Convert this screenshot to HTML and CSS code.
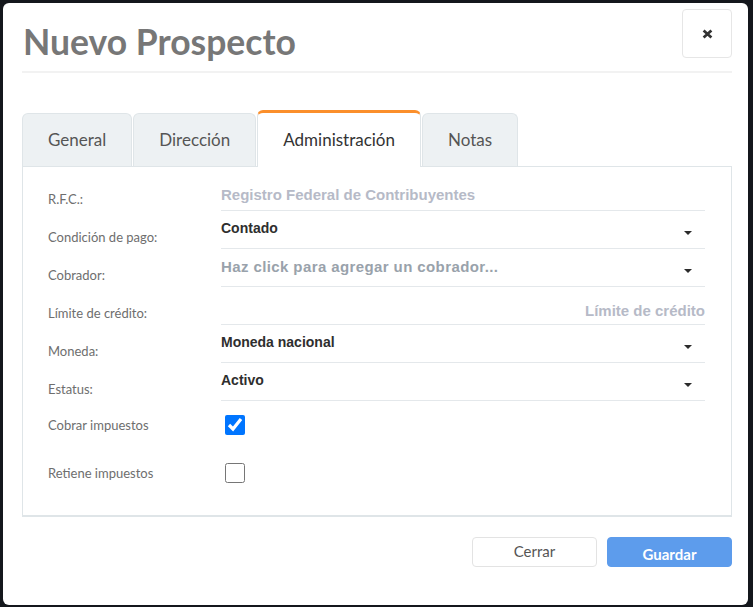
FILE: index.html
```html
<!DOCTYPE html>
<html lang="es">
<head>
<meta charset="utf-8">
<title>Nuevo Prospecto</title>
<link rel="stylesheet" href="styles.css">
</head>
<body>
<div class="modal">
  <header class="modal-header">
    <h1 class="title">Nuevo Prospecto</h1>
    <button class="close" type="button" aria-label="Cerrar">
      <svg width="11" height="10" viewBox="0 0 11 10"><path d="M1.6 1.4 L9.4 8.6 M9.4 1.4 L1.6 8.6" stroke="#333" stroke-width="2.7" fill="none"/></svg>
    </button>
  </header>

  <nav class="tabs">
    <div class="tab">General</div>
    <div class="tab">Dirección</div>
    <div class="tab active">Administración</div>
    <div class="tab">Notas</div>
  </nav>

  <div class="panel">
    <div class="row">
      <label class="lbl">R.F.C.:</label>
      <input class="field text-input" type="text" placeholder="Registro Federal de Contribuyentes">
    </div>
    <div class="row">
      <label class="lbl">Condición de pago:</label>
      <div class="field select"><span class="value">Contado</span><span class="caret"></span></div>
    </div>
    <div class="row">
      <label class="lbl">Cobrador:</label>
      <div class="field select"><span class="value placeholder">Haz click para agregar un cobrador...</span><span class="caret"></span></div>
    </div>
    <div class="row">
      <label class="lbl">Límite de crédito:</label>
      <input class="field text-input right" type="text" placeholder="Límite de crédito">
    </div>
    <div class="row">
      <label class="lbl">Moneda:</label>
      <div class="field select"><span class="value">Moneda nacional</span><span class="caret"></span></div>
    </div>
    <div class="row">
      <label class="lbl">Estatus:</label>
      <div class="field select"><span class="value">Activo</span><span class="caret"></span></div>
    </div>
    <div class="row check-row">
      <label class="lbl">Cobrar impuestos</label>
      <input class="check" type="checkbox" checked>
    </div>
    <div class="row check-row">
      <label class="lbl">Retiene impuestos</label>
      <input class="check" type="checkbox">
    </div>
  </div>

  <footer class="modal-footer">
    <button class="btn btn-default" type="button">Cerrar</button>
    <button class="btn btn-primary" type="button">Guardar</button>
  </footer>
</div>
</body>
</html>
```

FILE: styles.css
```css
html, body {
  margin: 0;
  padding: 0;
}

body {
  width: 753px;
  height: 607px;
  overflow: hidden;
  background: #14171c;
  font-family: Lato, "Open Sans", sans-serif;
}

.modal {
  margin: 3px 0 0 3px;
  width: 745px;
  height: 602px;
  box-sizing: border-box;
  padding: 0 16px 0 19px;
  background: #fff;
  border-radius: 6px;
}

/* Header */
.modal-header {
  height: 70px;
  box-sizing: border-box;
  display: flex;
  justify-content: space-between;
  align-items: flex-start;
  border-bottom: 2px solid #f2f2f2;
}

.title {
  margin: 19px 0 0 1px;
  font-size: 35.5px;
  line-height: 40px;
  font-weight: 700;
  color: #777;
}

.close {
  margin-top: 6px;
  width: 50px;
  height: 49px;
  padding: 0;
  background: #fff;
  border: 1px solid #e6e6e6;
  border-radius: 4px;
  display: flex;
  align-items: center;
  justify-content: center;
}

/* Tabs */
.tabs {
  display: flex;
  align-items: flex-end;
  margin-top: 37px;
  height: 56px;
}

.tab {
  height: 53px;
  box-sizing: border-box;
  padding: 0 25px 1px;
  margin-right: 1px;
  border: 1px solid #dfe5e8;
  border-bottom: none;
  border-radius: 6px 6px 0 0;
  background: #edf1f3;
  color: #555;
  font-size: 17px;
  display: flex;
  align-items: center;
  justify-content: center;
}

.tab.active {
  height: 57px;
  margin-bottom: -1px;
  border-top: 3px solid #fb8f2b;
  background: #fff;
  color: #333;
  position: relative;
  z-index: 1;
}

/* Panel */
.panel {
  border: 1px solid #dfe5e8;
  border-bottom-width: 2px;
  padding: 6px 26px 18px 25px;
}

.row {
  display: flex;
  align-items: flex-end;
  height: 38px;
}

.lbl {
  width: 173px;
  flex: none;
  font-size: 13px;
  line-height: 16px;
  color: #6e6e6e;
  margin-bottom: 4px;
}

.field {
  flex: 1;
  height: 38px;
  box-sizing: border-box;
  border: none;
  border-bottom: 1px solid #e4e8eb;
  font-family: "Liberation Sans", Arial, sans-serif;
  font-size: 14px;
  font-weight: 700;
  color: #2e2e2e;
}

.text-input {
  margin: 0;
  padding: 11px 0 6px;
  outline: none;
  background: transparent;
  font-size: 15px;
}

.text-input.right {
  text-align: right;
  padding: 13px 0 4px;
}

.text-input::placeholder {
  color: #b6bac7;
  opacity: 1;
}

.select {
  display: flex;
  justify-content: space-between;
  align-items: flex-start;
  padding-top: 9px;
  line-height: 17px;
}

.value.placeholder {
  color: #99a2ab;
  font-size: 15px;
  letter-spacing: 0.4px;
  line-height: 17px;
}

.caret {
  margin: 11px 13px 0 0;
  width: 0;
  height: 0;
  border-left: 4.5px solid transparent;
  border-right: 4.5px solid transparent;
  border-top: 4.5px solid #2b2b2b;
}

.check-row {
  height: 48px;
  align-items: center;
}

.check-row .lbl {
  margin-bottom: 0;
}

.check {
  width: 20px;
  height: 20px;
  margin: 0 0 0 4px;
}

/* Footer */
.modal-footer {
  display: flex;
  justify-content: flex-end;
  gap: 10px;
  margin-top: 20px;
}

.btn {
  width: 125px;
  height: 30px;
  box-sizing: border-box;
  border-radius: 4px;
  font-family: Lato, "Open Sans", sans-serif;
  font-size: 15px;
  line-height: 18px;
}

.btn-default {
  background: #fff;
  border: 1px solid #e3e3e3;
  color: #555;
  padding: 0 0 3px;
}

.btn-primary {
  background: #5d9cec;
  border: 1px solid #5d9cec;
  color: #fff;
  font-weight: 700;
  padding: 3px 0 0;
}
```
